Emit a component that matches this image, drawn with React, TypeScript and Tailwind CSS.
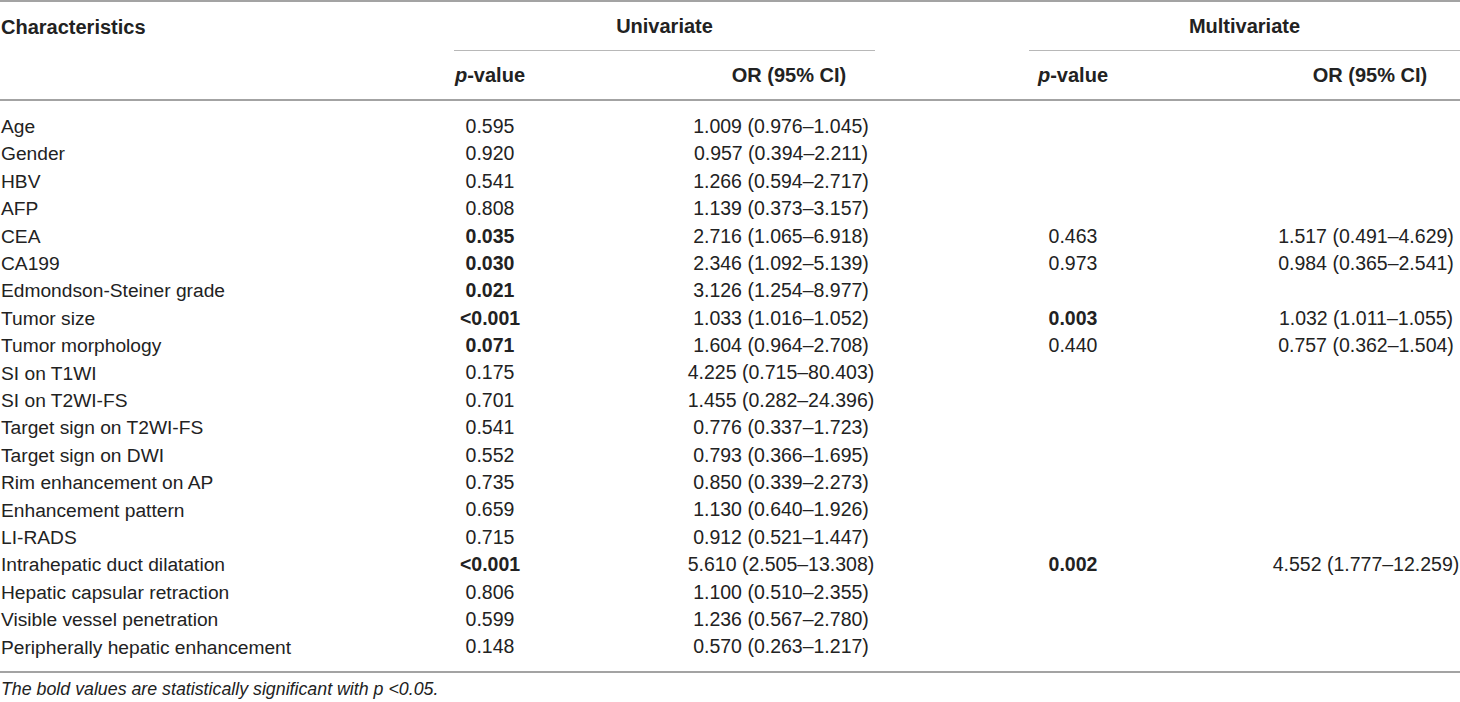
import React from "react";

type Row = {
  label: string;
  up: string;
  upBold?: boolean;
  uor: string;
  mp?: string;
  mpBold?: boolean;
  mor?: string;
};

const rows: Row[] = [
  { label: "Age", up: "0.595", uor: "1.009 (0.976–1.045)" },
  { label: "Gender", up: "0.920", uor: "0.957 (0.394–2.211)" },
  { label: "HBV", up: "0.541", uor: "1.266 (0.594–2.717)" },
  { label: "AFP", up: "0.808", uor: "1.139 (0.373–3.157)" },
  { label: "CEA", up: "0.035", upBold: true, uor: "2.716 (1.065–6.918)", mp: "0.463", mor: "1.517 (0.491–4.629)" },
  { label: "CA199", up: "0.030", upBold: true, uor: "2.346 (1.092–5.139)", mp: "0.973", mor: "0.984 (0.365–2.541)" },
  { label: "Edmondson-Steiner grade", up: "0.021", upBold: true, uor: "3.126 (1.254–8.977)" },
  { label: "Tumor size", up: "<0.001", upBold: true, uor: "1.033 (1.016–1.052)", mp: "0.003", mpBold: true, mor: "1.032 (1.011–1.055)" },
  { label: "Tumor morphology", up: "0.071", upBold: true, uor: "1.604 (0.964–2.708)", mp: "0.440", mor: "0.757 (0.362–1.504)" },
  { label: "SI on T1WI", up: "0.175", uor: "4.225 (0.715–80.403)" },
  { label: "SI on T2WI-FS", up: "0.701", uor: "1.455 (0.282–24.396)" },
  { label: "Target sign on T2WI-FS", up: "0.541", uor: "0.776 (0.337–1.723)" },
  { label: "Target sign on DWI", up: "0.552", uor: "0.793 (0.366–1.695)" },
  { label: "Rim enhancement on AP", up: "0.735", uor: "0.850 (0.339–2.273)" },
  { label: "Enhancement pattern", up: "0.659", uor: "1.130 (0.640–1.926)" },
  { label: "LI-RADS", up: "0.715", uor: "0.912 (0.521–1.447)" },
  { label: "Intrahepatic duct dilatation", up: "<0.001", upBold: true, uor: "5.610 (2.505–13.308)", mp: "0.002", mpBold: true, mor: "4.552 (1.777–12.259)" },
  { label: "Hepatic capsular retraction", up: "0.806", uor: "1.100 (0.510–2.355)" },
  { label: "Visible vessel penetration", up: "0.599", uor: "1.236 (0.567–2.780)" },
  { label: "Peripherally hepatic enhancement", up: "0.148", uor: "0.570 (0.263–1.217)" },
];

function PValue() {
  return (
    <span className="font-bold">
      <span className="italic">p</span>-value
    </span>
  );
}

export default function App() {
  return (
    <div
      className="w-[1460px] h-[702px] bg-white text-[#222] text-[19.5px] overflow-hidden whitespace-nowrap"
      style={{ fontFamily: '"Liberation Sans", Arial, sans-serif' }}
    >
      <div className="border-t-2 border-[#a3a3a3]">
        {/* header row 1 */}
        <div className="flex h-[49px] font-bold text-[20px]">
          <div className="w-[454px] pl-[1px] flex items-center">Characteristics</div>
          <div className="w-[421px] flex items-center justify-center border-b border-[#b8b8b8]">
            Univariate
          </div>
          <div className="w-[154px]" />
          <div className="w-[431px] flex items-center justify-center border-b border-[#b8b8b8]">
            Multivariate
          </div>
        </div>
        {/* header row 2 */}
        <div className="flex h-[50px] items-center border-b-2 border-[#a3a3a3] text-[20px]">
          <div className="w-[430px]" />
          <div className="w-[120px] text-center">
            <PValue />
          </div>
          <div className="ml-[129px] w-[220px] text-center font-bold">OR (95% CI)</div>
          <div className="ml-[124px] w-[100px] text-center">
            <PValue />
          </div>
          <div className="ml-[157px] w-[180px] text-center font-bold">OR (95% CI)</div>
        </div>
        {/* body */}
        <div className="pt-[12px] pb-[10px] border-b-2 border-[#a3a3a3]">
          {rows.map((r) => (
            <div key={r.label} className="flex h-[27.4px] items-center leading-none">
              <div className="w-[430px] pl-[1px] text-[19.2px]">{r.label}</div>
              <div className={`w-[120px] text-center ${r.upBold ? "font-bold" : ""}`}>{r.up}</div>
              <div className="ml-[121px] w-[220px] text-center">{r.uor}</div>
              <div className={`ml-[132px] w-[100px] text-center ${r.mpBold ? "font-bold" : ""}`}>
                {r.mp ?? ""}
              </div>
              <div className="ml-[149px] w-[188px] text-center">{r.mor ?? ""}</div>
            </div>
          ))}
        </div>
        {/* footnote */}
        <div className="pt-[5px] leading-[22px] italic text-[17.8px] pl-[1px]">
          The bold values are statistically significant with p &lt;0.05.
        </div>
      </div>
    </div>
  );
}
